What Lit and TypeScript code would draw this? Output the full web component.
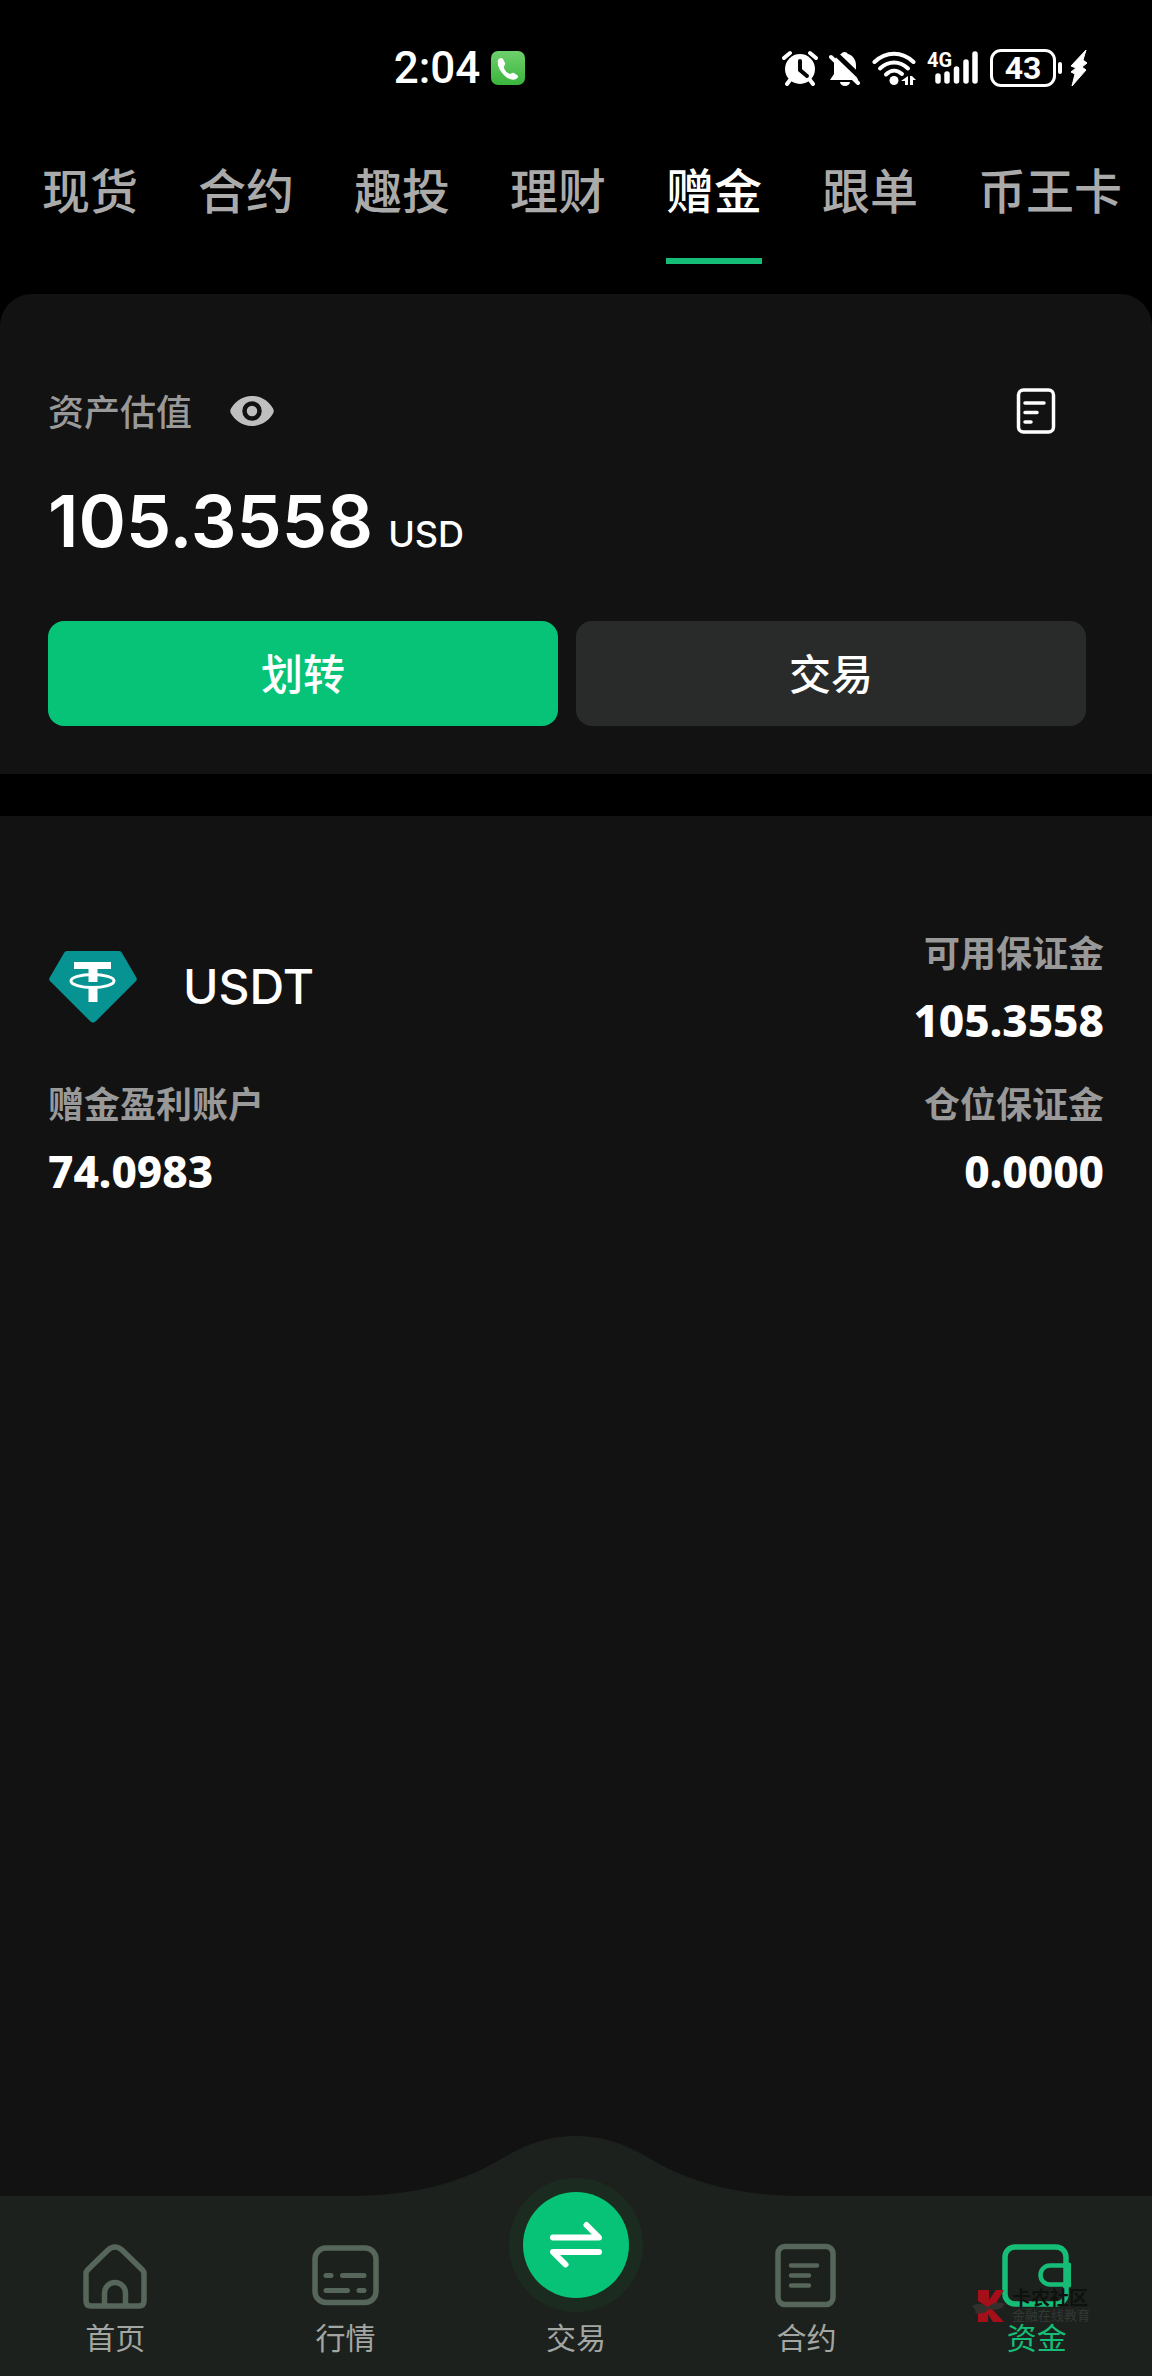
import { LitElement, html, css, svg } from "lit";
import { customElement, state } from "lit/decorators.js";

const alarmIcon = html`<svg width="36" height="36" viewBox="0 0 36 36" aria-hidden="true">
  <circle cx="18" cy="19" r="15" fill="#fff" />
  <path d="M2 8 8 3M34 8 28 3M8 30l-3 4M28 30l3 4" stroke="#fff" stroke-width="4" stroke-linecap="round" />
  <path d="M18 11v9l7 6" fill="none" stroke="#000" stroke-width="4" stroke-linecap="round" />
</svg>`;

const bellOffIcon = html`<svg width="32" height="36" viewBox="0 0 32 36" aria-hidden="true">
  <path d="M1 30h28L27 24V15c0-6-4-10-8-11a4 4 0 0 0-7 0C7 5 5 10 5 15v9Z" fill="#fff" />
  <path d="M11 32h10a5 4 0 0 1-10 0Z" fill="#fff" />
  <path d="M5 2 31 27" stroke="#000" stroke-width="5" />
  <path d="M2 7 29 33" stroke="#fff" stroke-width="4" stroke-linecap="round" />
</svg>`;

const wifiIcon = html`<svg width="44" height="36" viewBox="0 0 44 36" aria-hidden="true">
  <g fill="none" stroke="#fff" stroke-width="4" stroke-linecap="round">
    <path d="M2.500 12C14 1 30 1 41.500 12" />
    <path d="M8 18.500C16.500 10.500 27.500 10.500 36 18.500" />
    <path d="M14 24.500C19 19.500 25 19.500 30 24" />
  </g>
  <circle cx="22" cy="30.500" r="4.500" fill="#fff" />
  <path d="M36 26v9h-3v-4h-4ZM38 35v-9h2l4 4h-3v5Z" fill="#fff" />
</svg>`;

const phoneIcon = html`<svg width="34" height="34" viewBox="0 0 34 34" role="img" aria-label="通话中">
  <defs>
    <linearGradient id="call" x1="0" y1="0" x2="0" y2="1">
      <stop offset="0" stop-color="#6fd06c" />
      <stop offset="1" stop-color="#39b53c" />
    </linearGradient>
  </defs>
  <rect width="34" height="34" rx="7" fill="url(#call)" />
  <path d="M7 9c1-2 4-3 5-1l2 4c1 2-2 3-1 5 1 3 3 5 6 6 1 0 2-2 4-1l3 2c2 1 1 3-1 4-4 2-10-1-13-5-4-4-6-10-5-14Z" fill="#fff" />
</svg>`;

const eyeIcon = html`<svg width="44" height="30" viewBox="0 0 44 30" aria-hidden="true">
  <path d="M22 0C33 0 40 7 43 12.500q1.500 2.500 0 5C40 23 33 30 22 30S4 23 1 17.500q-1.500-2.500 0-5C4 7 11 0 22 0Z" fill="#bfbfbf" />
  <circle cx="22" cy="15" r="7.500" fill="none" stroke="#121212" stroke-width="4.500" />
</svg>`;

const recordsIcon = html`<svg width="40" height="46" viewBox="0 0 40 46" aria-hidden="true">
  <g fill="none" stroke="#fff" stroke-width="3.500" stroke-linecap="round">
    <rect x="2.500" y="2" width="35" height="42" rx="5" />
    <path d="M9 15h19M9 24.500h12M9 34h6" />
  </g>
</svg>`;

const tetherLogo = html`<svg width="90" height="72" viewBox="-1 0 90 72" aria-hidden="true">
  <path d="M18 0H70q2 0 3 2L87 26q2 3-1 5L47 70q-3 3-6 0L2 31q-3-2-1-5L15 2q1-2 3-2Z" fill="#089393" />
  <path d="M25 11h37v7H48.500v13h-9V18H25Z" fill="#fff" />
  <path d="M39.500 36h9v15h-9Z" fill="#fff" />
  <ellipse cx="43.500" cy="30" rx="21.500" ry="6.500" fill="none" stroke="#fff" stroke-width="3" />
</svg>`;

const homeIcon = svg`<path d="M3 29.500q0-2 1.500-3.500L25 6q7-6 14 0L59.500 26q1.500 1.500 1.500 3.500V57q0 5-5 5H8q-5 0-5-5Z" /><path d="M21.500 61V49a10.500 10.500 0 0 1 21 0v12" />`;
const marketIcon = svg`<rect x="1" y="4" width="61" height="54.500" rx="11" /><path d="M12 31.500h5M28.500 31.500h21.500M12 46.500h21.500M45 46.500h5" stroke-width="5" />`;
const contractIcon = svg`<rect x="4" y="2.500" width="55" height="58" rx="7" /><path d="M17 21.500h26M17 31.500h18M17 41.500h18" stroke-width="4.500" />`;
const walletIcon = svg`<rect x="0" y="3" width="61" height="57" rx="10" /><path d="M64 21.500H45a9.500 9.500 0 0 0 0 19H64" stroke-width="4.500" /><path d="M64.500 20v22" stroke-width="3" />`;

interface NavItem {
  label: string;
  icon?: unknown;
}

const NAV: NavItem[] = [
  { label: "首页", icon: homeIcon },
  { label: "行情", icon: marketIcon },
  { label: "交易" },
  { label: "合约", icon: contractIcon },
  { label: "资金", icon: walletIcon },
];

const TABS = ["现货", "合约", "趣投", "理财", "赠金", "跟单", "币王卡"];

@customElement("status-bar")
export class StatusBar extends LitElement {
  static styles = css`
    :host {
      display: flex;
      align-items: center;
      justify-content: space-between;
      height: 136px;
      padding: 0 64px 0 34%;
      color: #fff;
      font-family: Roboto, sans-serif;
    }
    .group {
      display: flex;
      align-items: center;
      gap: 11px;
    }
    .time {
      padding-left: 2px;
      font-size: 44px;
      line-height: 52px;
      font-weight: 500;
    }
    .signal {
      display: grid;
      width: 52px;
      height: 36px;
    }
    .signal > * {
      grid-area: 1 / 1;
    }
    .network {
      font-size: 20px;
      line-height: 20px;
      font-weight: 700;
    }
    .power {
      display: flex;
      align-items: center;
      gap: 2px;
    }
    .battery {
      box-sizing: border-box;
      width: 66px;
      height: 38px;
      border: 3px solid #fff;
      border-radius: 11px;
      font-size: 32px;
      line-height: 32px;
      font-weight: 700;
      text-align: center;
    }
    .cap {
      width: 4px;
      height: 12px;
      border-radius: 2px;
      background: #fff;
    }
    .bolt {
      margin-left: 6px;
    }
  `;

  render() {
    return html`
      <div class="group">
        <span class="time">2:04</span>
        ${phoneIcon}
      </div>
      <div class="group">
        ${alarmIcon} ${bellOffIcon} ${wifiIcon}
        <div class="signal">
          <svg width="52" height="36" viewBox="0 0 52 36" aria-hidden="true">
            <path d="M11 26v5M20 24v7M29.500 19v12M39 12v19M48 4v27" stroke="#fff" stroke-width="5.500" stroke-linecap="round" />
          </svg>
          <span class="network">4G</span>
        </div>
        <div class="power">
          <div class="battery">43</div>
          <div class="cap"></div>
          <svg class="bolt" width="18" height="38" viewBox="0 0 18 38" aria-hidden="true">
            <path d="M16 1 1 17l5 2-5 4 4 2-3 12 14-16-4-3 5-4-4-3Z" fill="#fff" stroke="#fff" stroke-linejoin="round" />
          </svg>
        </div>
      </div>
    `;
  }
}

@customElement("bottom-nav")
export class BottomNav extends LitElement {
  static styles = css`
    :host {
      display: block;
    }
    .bar {
      position: relative;
      display: grid;
      grid-template-columns: repeat(5, 1fr);
      align-items: end;
      padding-bottom: 22px;
      background: #1d211d;
    }
    .bump {
      position: absolute;
      left: 50%;
      bottom: 100%;
      transform: translateX(-50%);
      display: block;
    }
    .item {
      position: relative;
      display: flex;
      flex-direction: column;
      align-items: center;
      gap: 10px;
      color: #a3a6a3;
      text-decoration: none;
      font-size: 30px;
      line-height: 36px;
    }
    .icon {
      display: block;
      overflow: visible;
      fill: none;
      stroke: #56665a;
      stroke-width: 5.5px;
      stroke-linecap: round;
      stroke-linejoin: round;
    }
    .active {
      color: #16bd77;
    }
    .active .icon {
      stroke: #16bd77;
    }
    .trade {
      gap: 6px;
      margin-top: -18px;
    }
    .watermark {
      position: absolute;
      right: 62px;
      bottom: 52px;
      display: flex;
      align-items: center;
      gap: 6px;
      color: #0f110f;
      pointer-events: none;
    }
    .brand {
      display: block;
      font-size: 19px;
      line-height: 18px;
      font-weight: 700;
    }
    .slogan {
      display: block;
      color: #353936;
      font-size: 13px;
      line-height: 18px;
    }
  `;

  private renderItem(item: NavItem) {
    if (!item.icon) {
      return html`<a class="item trade" href="#trade">
        <svg width="134" height="134" viewBox="0 0 134 134" aria-hidden="true">
          <circle cx="67" cy="67" r="67" fill="#1c2b1f" />
          <circle cx="67" cy="67" r="53" fill="#06c377" />
          <path
            d="M44 59.500H90L77.500 47M90 74H44L56.500 86.500"
            fill="none"
            stroke="#fff"
            stroke-width="6"
            stroke-linecap="round"
            stroke-linejoin="round"
          />
        </svg>
        ${item.label}
      </a>`;
    }
    const active = item.icon === walletIcon;
    return html`<a class="item ${active ? "active" : ""}" href="#" aria-current=${active ? "page" : "false"}>
      <svg class="icon" width="64" height="64" viewBox="0 0 64 64" aria-hidden="true">${item.icon}</svg>
      ${item.label}
    </a>`;
  }

  render() {
    return html`
      <nav class="bar" aria-label="主导航">
        <svg class="bump" width="460" height="60" viewBox="0 0 460 60" aria-hidden="true">
          <path d="M0 60C55 60 95 52 135 34 160 22 185 0 230 0S300 22 325 34C365 52 405 60 460 60Z" fill="#1d211d" />
        </svg>
        ${NAV.map((item) => this.renderItem(item))}
        <div class="watermark">
          <svg width="34" height="34" viewBox="0 0 34 34" aria-hidden="true">
            <path d="M6 1h11v10L24 1h8l-8 13-6 4 14 15H21l-5-8v8H6V22l8-5-8-5Z" fill="#a50f1a" />
            <path d="M0 17q8-5 16 1 8-7 17-3-5 8-16 5-5 6-14 4 2-3-3-7Z" fill="#33302d" />
          </svg>
          <div>
            <span class="brand">卡农社区</span>
            <span class="slogan">金融在线教育</span>
          </div>
        </div>
      </nav>
    `;
  }
}

@customElement("app-root")
export class AppRoot extends LitElement {
  @state() private tab = 4;

  static styles = css`
    :host {
      display: flex;
      flex-direction: column;
      min-height: 100vh;
      background: #000;
      color: #fff;
      font-family: "Noto Sans CJK SC", sans-serif;
    }
    button {
      border: 0;
      padding: 0;
      background: none;
      color: inherit;
      font: inherit;
      cursor: pointer;
    }
    svg {
      display: block;
    }
    .tabs {
      display: flex;
      gap: 60px;
      padding: 24px 30px 30px 42px;
    }
    .tab {
      flex: none;
      padding-bottom: 42px;
      border-bottom: 6px solid transparent;
      color: #aaa;
      font-size: 48px;
      line-height: 56px;
      font-weight: 500;
    }
    .tab.selected {
      border-color: #16bd77;
      color: #fff;
    }
    .summary {
      padding: 94px 66px 48px 48px;
      border-radius: 32px 32px 0 0;
      background: #121212;
    }
    .heading {
      display: flex;
      align-items: center;
      height: 46px;
      padding-right: 30px;
    }
    .title {
      margin: 0 38px 0 0;
      padding-bottom: 3px;
      color: #999;
      font-size: 36px;
      line-height: 44px;
      font-weight: 500;
    }
    .records {
      margin-left: auto;
    }
    .amount {
      display: flex;
      align-items: baseline;
      gap: 15px;
      margin: 51px 0 64px;
      font-family: Inter, sans-serif;
      font-size: 72px;
      line-height: 72px;
      font-weight: 600;
    }
    .unit {
      font-size: 36px;
      line-height: 36px;
      font-weight: 500;
    }
    .actions {
      display: grid;
      grid-template-columns: 1fr 1fr;
      gap: 18px;
    }
    .action {
      height: 105px;
      padding-bottom: 4px;
      border-radius: 16px;
      background: #292b2a;
      font-size: 42px;
      font-weight: 500;
    }
    .action.primary {
      background: #06c377;
    }
    .assets {
      flex: 1;
      margin-top: 42px;
      padding: 111px 48px 120px;
      background: #121212;
    }
    .grid {
      display: grid;
      grid-template-columns: 1fr 1fr;
      align-items: center;
      row-gap: 31px;
      margin: 0;
    }
    .coin {
      display: flex;
      align-items: center;
      gap: 45px;
      font-family: Inter, sans-serif;
      font-size: 48px;
      line-height: 56px;
      font-weight: 500;
    }
    .figure {
      margin: 0;
    }
    .figure.end {
      text-align: right;
    }
    .label {
      margin-bottom: 18px;
      color: #999;
      font-size: 36px;
      line-height: 48px;
      font-weight: 700;
    }
    .value {
      margin: 0;
      font-family: "Noto Sans", sans-serif;
      font-size: 44px;
      line-height: 54px;
      font-weight: 800;
    }
  `;

  private figure(label: string, value: string, end = false) {
    return html`<dl class="figure ${end ? "end" : ""}">
      <dt class="label">${label}</dt>
      <dd class="value">${value}</dd>
    </dl>`;
  }

  render() {
    return html`
      <status-bar></status-bar>
      <div class="tabs" role="tablist">
        ${TABS.map(
          (name, i) => html`<button
            class="tab ${i === this.tab ? "selected" : ""}"
            role="tab"
            aria-selected=${i === this.tab}
            @click=${() => (this.tab = i)}
          >${name}</button>`
        )}
      </div>
      <section class="summary">
        <div class="heading">
          <h1 class="title">资产估值</h1>
          <button aria-label="隐藏资产">${eyeIcon}</button>
          <button class="records" aria-label="记录">${recordsIcon}</button>
        </div>
        <div class="amount">105.3558<span class="unit">USD</span></div>
        <div class="actions">
          <button class="action primary">划转</button>
          <button class="action">交易</button>
        </div>
      </section>
      <section class="assets">
        <div class="grid">
          <div class="coin">${tetherLogo}USDT</div>
          ${this.figure("可用保证金", "105.3558", true)}
          ${this.figure("赠金盈利账户", "74.0983")}
          ${this.figure("仓位保证金", "0.0000", true)}
        </div>
      </section>
      <bottom-nav></bottom-nav>
    `;
  }
}
